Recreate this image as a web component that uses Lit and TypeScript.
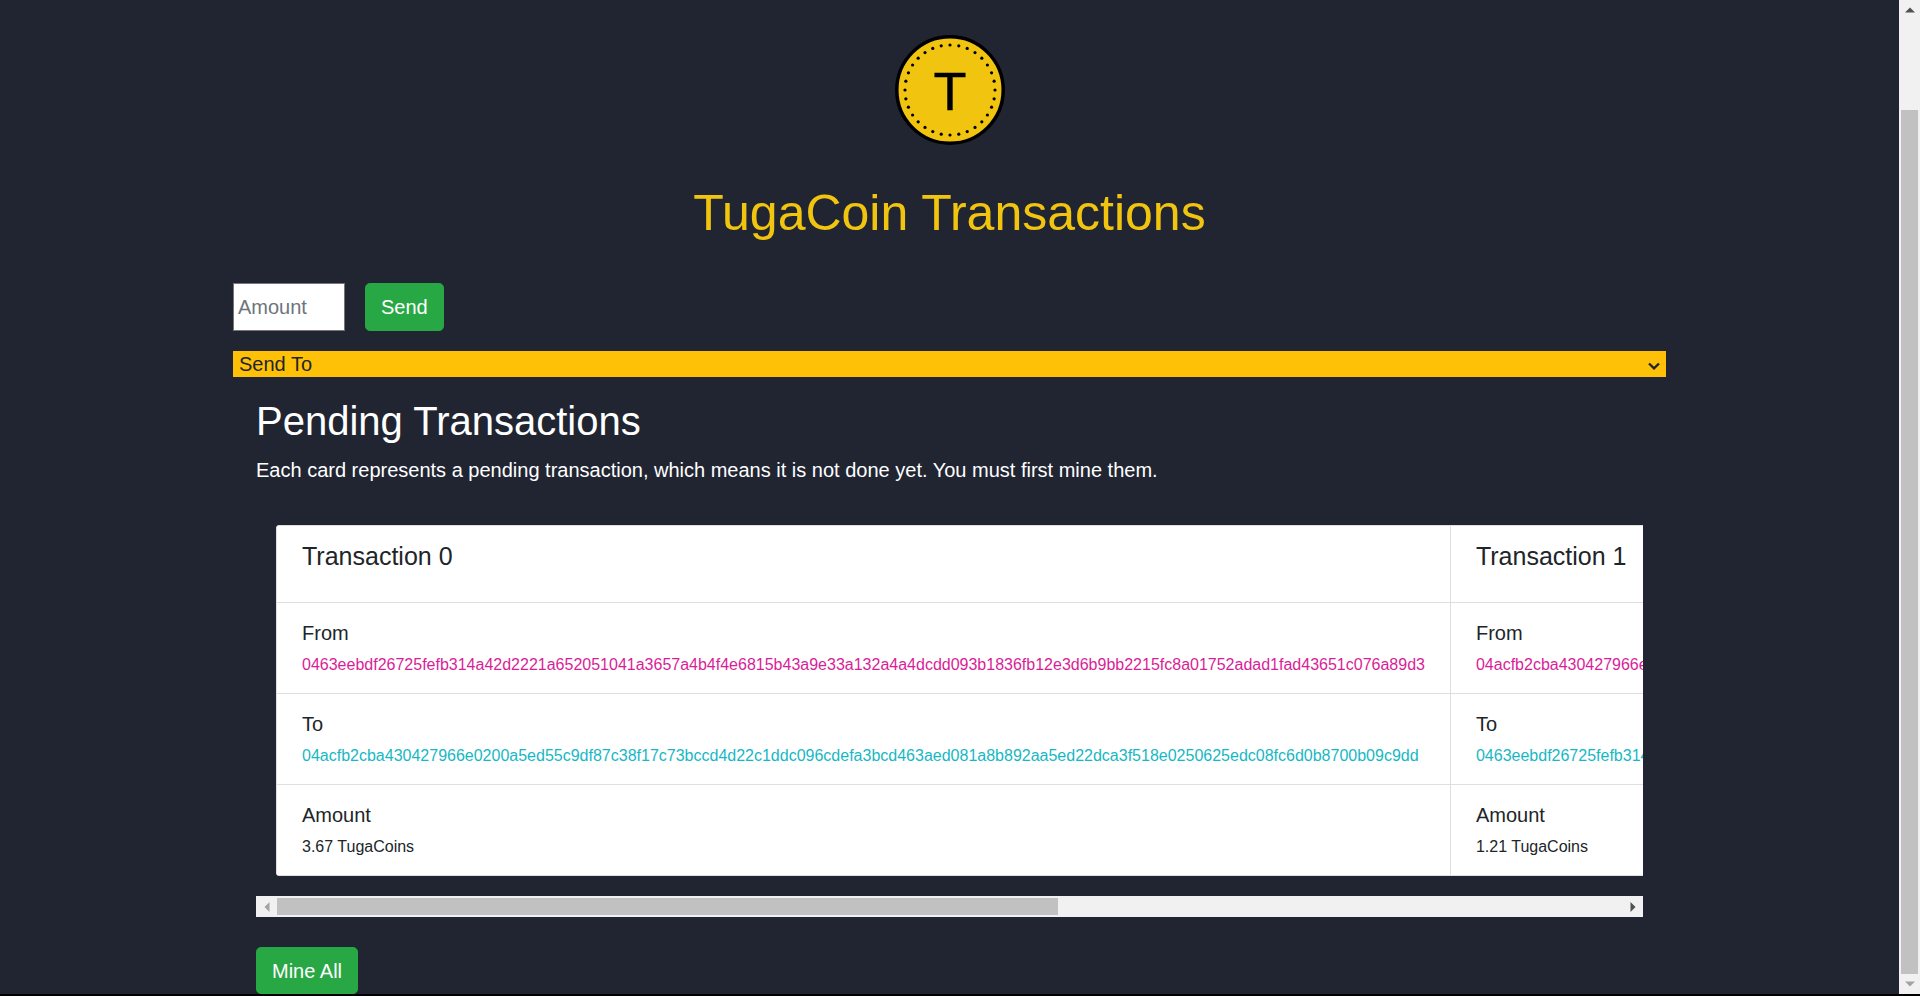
import { LitElement, html, css, svg } from "lit";
import { customElement } from "lit/decorators.js";

const KEY_A =
  "0463eebdf26725fefb314a42d2221a652051041a3657a4b4f4e6815b43a9e33a132a4a4dcdd093b1836fb12e3d6b9bb2215fc8a01752adad1fad43651c076a89d3";
const KEY_B =
  "04acfb2cba430427966e0200a5ed55c9df87c38f17c73bccd4d22c1ddc096cdefa3bcd463aed081a8b892aa5ed22dca3f518e0250625edc08fc6d0b8700b09c9dd";

const transactions = [
  { from: KEY_A, to: KEY_B, amount: "3.67" },
  { from: KEY_B, to: KEY_A, amount: "1.21" },
];

// 32 little dots round the inside of the coin
const coinDots = Array.from({ length: 32 }, (_, i) => {
  const angle = (i * Math.PI) / 16;
  return svg`<circle cx=${55 + 45 * Math.cos(angle)} cy=${55 + 45 * Math.sin(angle)} r="1.6" fill="#000"></circle>`;
});

@customElement("app-root")
export class AppRoot extends LitElement {
  static styles = css`
    :host {
      display: flex;
      flex-direction: column;
      height: 996px;
      overflow: hidden;
      background: #000;
      font-family: "Liberation Sans", Arial, sans-serif;
      color: #212529;
    }

    .window {
      display: flex;
      height: 994px;
      flex: none;
    }

    .page {
      flex: 1;
      min-width: 0;
      background: #212532;
      padding: 35px 233px 0;
      box-sizing: border-box;
      overflow: hidden;
    }

    .logo {
      display: block;
      margin: 0 auto;
    }

    .title {
      margin: 38px 0 40px;
      text-align: center;
      font-size: 50px;
      font-weight: 400;
      line-height: 60px;
      color: #f1c40f;
    }

    .send-row {
      display: flex;
      gap: 20px;
      margin-bottom: 20px;
    }

    .amount {
      width: 112px;
      height: 48px;
      box-sizing: border-box;
      padding: 1px 4px;
      border: 1px solid #767676;
      border-radius: 0;
      background: #fff;
      font: 20px "Liberation Sans", Arial, sans-serif;
      outline: none;
    }

    .amount::placeholder {
      color: #6c757d;
      opacity: 1;
    }

    .btn {
      height: 48px;
      padding: 0 15px;
      border: 1px solid #28a745;
      border-radius: 4.8px;
      background: #28a745;
      color: #fff;
      font: 20px/1.5 "Liberation Sans", Arial, sans-serif;
    }

    .select-wrap {
      position: relative;
    }

    .send-to {
      display: block;
      width: 100%;
      height: 26px;
      padding: 0 0 0 6px;
      border: 0;
      border-radius: 0;
      appearance: none;
      background: #ffc107;
      color: #212529;
      font: 20px "Liberation Sans", Arial, sans-serif;
    }

    .chevron {
      position: absolute;
      top: 11px;
      right: 6px;
      pointer-events: none;
    }

    .pending {
      padding: 20px 23px 0;
    }

    .heading {
      margin: 0 0 10px;
      font-size: 40px;
      font-weight: 400;
      line-height: 48px;
      color: #fff;
    }

    .lead {
      margin: 0 0 40px;
      font-size: 20px;
      line-height: 30px;
      color: #fff;
    }

    .deck {
      display: flex;
      margin-left: 20px;
      overflow: hidden;
      border-radius: 4px 0 0 4px;
    }

    .card {
      flex: none;
      background: #fff;
      border: 1px solid #dfdfdf;
    }

    .card + .card {
      border-left: 0;
    }

    .card-title {
      height: 77px;
      box-sizing: border-box;
      padding: 15px 25px 0;
      font-size: 25px;
      line-height: 30px;
      border-bottom: 1px solid #dfdfdf;
    }

    .item {
      height: 91px;
      box-sizing: border-box;
      padding: 15px 25px 0;
      border-bottom: 1px solid #dfdfdf;
    }

    .item:last-child {
      border-bottom: 0;
      height: 90px;
    }

    .label {
      margin-bottom: 5px;
      font-size: 20px;
      line-height: 30px;
    }

    .value {
      font-size: 16px;
      line-height: 24px;
    }

    .from {
      color: #d91e98;
    }

    .to {
      color: #17b8c4;
    }

    .h-scroll {
      display: flex;
      align-items: stretch;
      height: 21px;
      margin-top: 20px;
      background: #f1f1f1;
    }

    .h-arrow {
      display: flex;
      align-items: center;
      justify-content: center;
      flex: none;
      width: 21px;
    }

    .h-thumb {
      width: 781px;
      margin: 2px 0;
      background: #c1c1c1;
    }

    .h-rest {
      flex: 1;
    }

    .mine {
      display: block;
      margin-top: 30px;
      height: 47px;
    }

    .v-scroll {
      display: flex;
      flex-direction: column;
      flex: none;
      width: 21px;
      background: #f1f1f1;
    }

    .v-arrow {
      display: flex;
      align-items: center;
      justify-content: center;
      flex: none;
      height: 20px;
    }

    .v-track {
      flex: 1;
      display: flex;
      flex-direction: column;
      padding: 90px 2px 0;
    }

    .v-thumb {
      height: 864px;
      background: #c1c1c1;
    }
  `;

  renderCard(tx: { from: string; to: string; amount: string }, index: number) {
    return html`
      <div class="card">
        <div class="card-title">Transaction ${index}</div>
        <div class="item">
          <div class="label">From</div>
          <div class="value from">${tx.from}</div>
        </div>
        <div class="item">
          <div class="label">To</div>
          <div class="value to">${tx.to}</div>
        </div>
        <div class="item">
          <div class="label">Amount</div>
          <div class="value">${tx.amount} TugaCoins</div>
        </div>
      </div>
    `;
  }

  render() {
    return html`
      <div class="window">
        <main class="page">
          <svg class="logo" width="110" height="110" viewBox="0 0 110 110">
            <circle cx="55" cy="55" r="53.2" fill="#f1c40f" stroke="#000" stroke-width="3.5"></circle>
            ${coinDots}
            <text x="55" y="75" text-anchor="middle" font-family="Liberation Sans, Arial, sans-serif" font-size="54" fill="#000" stroke="#000" stroke-width="0.4">T</text>
          </svg>
          <h1 class="title">TugaCoin Transactions</h1>

          <div class="send-row">
            <input class="amount" type="text" placeholder="Amount" />
            <button class="btn">Send</button>
          </div>
          <div class="select-wrap">
            <select class="send-to"><option>Send To</option></select>
            <svg class="chevron" width="12" height="8" viewBox="0 0 12 8">
              <path d="M1 1.5 L6 6.3 L11 1.5" fill="none" stroke="#212529" stroke-width="2.4"></path>
            </svg>
          </div>

          <section class="pending">
            <h2 class="heading">Pending Transactions</h2>
            <p class="lead">Each card represents a pending transaction, which means it is not done yet. You must first mine them.</p>
            <div class="deck">
              ${transactions.map((tx, i) => this.renderCard(tx, i))}
            </div>
            <div class="h-scroll">
              <div class="h-arrow">
                <svg width="6" height="10" viewBox="0 0 6 10"><polygon points="5.5,0 5.5,10 0.5,5" fill="#a3a3a3"></polygon></svg>
              </div>
              <div class="h-thumb"></div>
              <div class="h-rest"></div>
              <div class="h-arrow">
                <svg width="6" height="10" viewBox="0 0 6 10"><polygon points="0.5,0 0.5,10 5.5,5" fill="#505050"></polygon></svg>
              </div>
            </div>
            <button class="btn mine">Mine All</button>
          </section>
        </main>

        <div class="v-scroll">
          <div class="v-arrow">
            <svg width="10" height="6" viewBox="0 0 10 6"><polygon points="0,5.5 10,5.5 5,0.5" fill="#505050"></polygon></svg>
          </div>
          <div class="v-track"><div class="v-thumb"></div></div>
          <div class="v-arrow">
            <svg width="10" height="6" viewBox="0 0 10 6"><polygon points="0,0.5 10,0.5 5,5.5" fill="#a3a3a3"></polygon></svg>
          </div>
        </div>
      </div>
    `;
  }
}
